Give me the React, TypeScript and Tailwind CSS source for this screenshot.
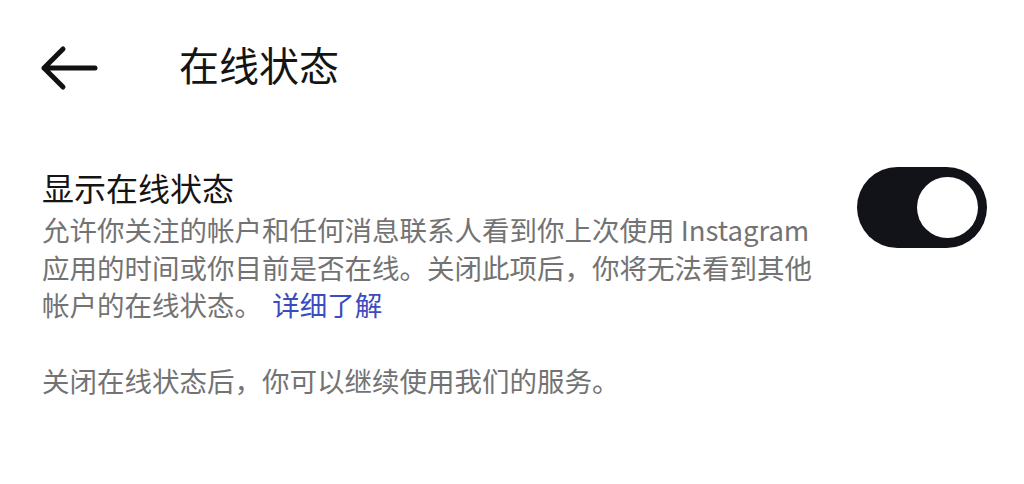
import React from "react";

export default function App() {
  const cjk = { fontFamily: '"Noto Sans CJK SC", "Noto Sans", sans-serif' };
  return (
    <div className="w-[1024px] h-[484px] bg-white overflow-hidden" style={cjk}>
      <div className="flex items-center h-[64px] mt-[36px] pl-[40px]">
        <svg width="60" height="46" viewBox="0 0 60 46" className="shrink-0">
          <path d="M55 23 H4 M23 4 L4 23 L23 42" fill="none" stroke="#111" strokeWidth="5" strokeLinecap="round" strokeLinejoin="round" />
        </svg>
        <div className="ml-[79px] mt-[-8px] text-[40px] leading-none text-[#141414]">在线状态</div>
      </div>
      <div className="flex items-start justify-between pl-[42px] pr-[37px] mt-[67px]">
        <div className="flex flex-col">
          <div className="text-[32px] leading-[40px] text-[#141414]">显示在线状态</div>
          <div className="text-[27.5px] leading-[37.5px] text-[#737373] whitespace-nowrap mt-[4px]">
            <div>允许你关注的帐户和任何消息联系人看到你上次使用 Instagram</div>
            <div>应用的时间或你目前是否在线。关闭此项后，你将无法看到其他</div>
            <div>
              帐户的在线状态。 <span className="text-[#3b4bc0] ml-[4px]">详细了解</span>
            </div>
          </div>
        </div>
        <div className="mt-[0px] w-[130px] h-[81px] rounded-full bg-[#111318] flex items-center justify-end pr-[9px] shrink-0">
          <div className="w-[61px] h-[61px] rounded-full bg-white" />
        </div>
      </div>
      <div className="pl-[42px] mt-[38px] text-[27.5px] leading-[37px] text-[#737373] whitespace-nowrap">
        关闭在线状态后，你可以继续使用我们的服务。
      </div>
    </div>
  );
}
